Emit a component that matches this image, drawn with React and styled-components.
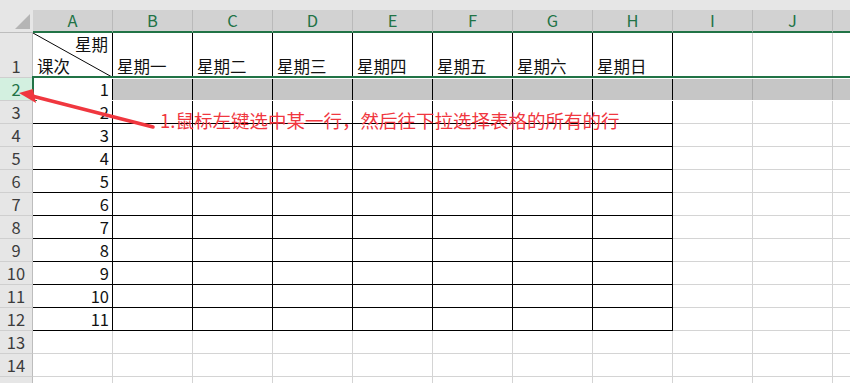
import React from 'react';
import styled, { createGlobalStyle } from 'styled-components';

const GlobalStyle = createGlobalStyle`
  html, body {
    margin: 0;
    padding: 0;
    background: #fff;
  }
  * {
    box-sizing: border-box;
  }
`;

const Sheet = styled.div`
  position: relative;
  width: 850px;
  height: 383px;
  overflow: hidden;
  font-family: "Noto Sans CJK SC", "Liberation Sans", sans-serif;
  font-size: 16.5px;
  color: #111;
  background: #fff;
`;

const HeaderBar = styled.div`
  display: flex;
  height: 33px;
  background: #e6e6e6;
`;

const Corner = styled.div`
  position: relative;
  flex: none;
  width: 33px;
  border-bottom: 1px solid #bdbdbd;

  &::after {
    content: '';
    position: absolute;
    right: 3px;
    bottom: 3px;
    width: 0;
    height: 0;
    border-left: 15px solid transparent;
    border-bottom: 15px solid #b5b5b5;
  }
`;

const ColHead = styled.div`
  flex: none;
  width: 80px;
  margin-top: 10px;
  height: 23px;
  display: flex;
  align-items: center;
  justify-content: center;
  background: #d2d2d2;
  border-right: 1px solid #bababa;
  border-bottom: 2px solid #217346;
  color: #217346;
  font-size: 16.5px;
  line-height: 1;
`;

const Row = styled.div`
  position: relative;
  display: flex;
  height: ${(p) => p.$h}px;
`;

const RowHead = styled.div`
  flex: none;
  width: 33px;
  display: flex;
  align-items: flex-end;
  justify-content: center;
  background: ${(p) => (p.$active ? '#d3f0e0' : '#e6e6e6')};
  color: ${(p) => (p.$active ? '#217346' : '#3c3c3c')};
  border-right: 1px solid #bdbdbd;
  border-bottom: 1px solid #cfcfcf;
  line-height: 22px;
`;

const Cell = styled.div`
  flex: none;
  width: 80px;
  display: flex;
  align-items: flex-end;
  justify-content: ${(p) => (p.$right ? 'flex-end' : 'flex-start')};
  padding: 0 3px 0 4px;
  line-height: 22px;
  white-space: nowrap;
  background: ${(p) => (p.$sel ? '#c6c6c6' : '#fff')};
  border-right: 1px solid ${(p) => (p.$boxed ? '#000' : p.$sel ? '#ababab' : '#d4d4d4')};
  border-bottom: 1px solid ${(p) => (p.$boxed ? '#000' : '#d4d4d4')};
`;

const DiagCell = styled.div`
  position: relative;
  flex: none;
  width: 80px;
  display: flex;
  flex-direction: column;
  justify-content: space-between;
  padding: 0 4px;
  line-height: 22px;
  background: #fff;
  border-right: 1px solid #000;
  border-bottom: 1px solid #000;

  svg {
    position: absolute;
    inset: 0;
    width: 100%;
    height: 100%;
  }
`;

const TopLabel = styled.span`
  align-self: flex-end;
`;

const BottomLabel = styled.span`
  align-self: flex-start;
`;

const Selection = styled.div`
  position: absolute;
  left: 32px;
  right: -4px;
  top: -2px;
  bottom: -2px;
  border: 2px solid #217346;
  box-shadow: inset 0 0 0 1px #fff;
  pointer-events: none;
`;

const FillHandle = styled.div`
  position: absolute;
  left: -2px;
  bottom: -4px;
  width: 6px;
  height: 6px;
  background: #217346;
  border: 1px solid #fff;
`;

const Overlay = styled.svg`
  position: absolute;
  left: 0;
  top: 0;
  pointer-events: none;
`;

const Note = styled.div`
  position: absolute;
  left: 160px;
  top: 109px;
  font-size: 18.5px;
  line-height: 22px;
  color: #f0373f;
  white-space: nowrap;
`;

// K is only a sliver at the right edge, so its letter is never shown
const COLS = ['A', 'B', 'C', 'D', 'E', 'F', 'G', 'H', 'I', 'J', ''];
const DAYS = ['星期一', '星期二', '星期三', '星期四', '星期五', '星期六', '星期日'];
const TABLE_COLS = 8;
const TABLE_ROWS = 12;
const VISIBLE_ROWS = 14;

const App = () => {
  const rows = [];
  for (let r = 1; r <= VISIBLE_ROWS + 1; r++) {
    const selected = r === 2;
    const cells = COLS.map((c, i) => {
      const boxed = r <= TABLE_ROWS && i < TABLE_COLS;
      if (r === 1 && i === 0) {
        return (
          <DiagCell key={i}>
            <svg viewBox="0 0 80 45" preserveAspectRatio="none">
              <line x1="0" y1="0" x2="80" y2="45" stroke="#000" strokeWidth="1" />
            </svg>
            <TopLabel>星期</TopLabel>
            <BottomLabel>课次</BottomLabel>
          </DiagCell>
        );
      }
      let text = '';
      let right = false;
      if (r === 1 && i >= 1 && i <= 7) text = DAYS[i - 1];
      if (r >= 2 && r <= TABLE_ROWS && i === 0) {
        text = r - 1;
        right = true;
      }
      return (
        <Cell key={i} $boxed={boxed} $sel={selected && i > 0} $right={right}>
          {text}
        </Cell>
      );
    });
    rows.push(
      <Row key={r} $h={r === 1 ? 45 : 23}>
        <RowHead $active={selected}>{r <= VISIBLE_ROWS ? r : ''}</RowHead>
        {cells}
        {selected && (
          <Selection>
            <FillHandle />
          </Selection>
        )}
      </Row>
    );
  }

  return (
    <>
      <GlobalStyle />
      <Sheet>
        <HeaderBar>
          <Corner />
          {COLS.map((c, i) => (
            <ColHead key={i}>{c}</ColHead>
          ))}
        </HeaderBar>
        {rows}
        <Overlay width="850" height="383" viewBox="0 0 850 383">
          <line x1="153" y1="127" x2="32" y2="96" stroke="#f0373f" strokeWidth="3.5" strokeLinecap="round" />
          <polygon points="19,93 33,89 36,103" fill="#f0373f" />
        </Overlay>
        <Note>1.鼠标左键选中某一行，然后往下拉选择表格的所有的行</Note>
      </Sheet>
    </>
  );
};

export default App;
